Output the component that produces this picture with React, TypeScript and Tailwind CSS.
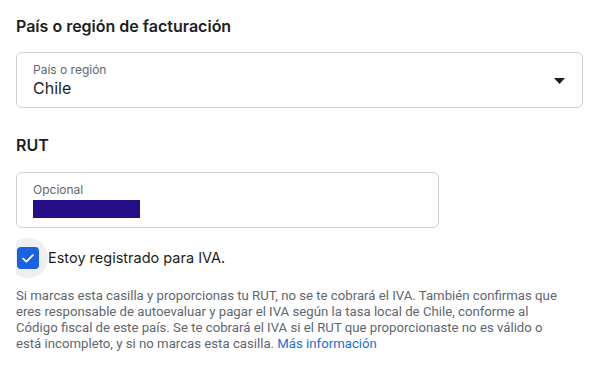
import React from 'react';

function FieldBox({ label, children, className }: { label: string; children: React.ReactNode; className?: string }) {
    return (
        <div className={`border border-[#ccd0d5] rounded-md px-4 pt-[10px] bg-white ${className ?? ''}`}>
            <div className="text-[12px] leading-[14px] text-[#606770]">{label}</div>
            {children}
        </div>
    );
}

export default function App() {
    return (
        <div className="w-[598px] h-[370px] bg-white px-4 pt-[15px] font-['Inter','Liberation_Sans',sans-serif] text-[#1c1e21]">
            <h2 className="text-[16px] leading-[22px] font-semibold">País o región de facturación</h2>

            <FieldBox label="País o región" className="mt-[15px] w-[567px] h-[56px] relative">
                <div className="text-[16px] leading-[20px] mt-[1px]">Chile</div>
                <svg className="absolute right-[17px] top-[25px]" width="11" height="6" viewBox="0 0 11 6">
                    <path d="M0 0 H11 L5.5 6 Z" fill="#1c1e21" />
                </svg>
            </FieldBox>

            <h2 className="mt-[26px] text-[16px] leading-[22px] font-semibold">RUT</h2>

            <FieldBox label="Opcional" className="mt-[16px] w-[423px] h-[56px]">
                <div className="mt-[3px] h-[18px] w-[107px] bg-[#260e89]" />
            </FieldBox>

            <div className="mt-[10px] flex items-center gap-[8px]">
                <div className="relative w-[24px] h-[40px] flex items-center">
                    <div className="absolute left-[-8px] top-0 w-[40px] h-[40px] rounded-full bg-[#eeeff1]" style={{ clipPath: 'inset(0 0 0 8px)' }} />
                    <div className="relative ml-[1px] w-[22px] h-[22px] rounded-[4px] bg-[#1a62e2] flex items-center justify-center">
                        <svg width="12" height="9" viewBox="0 0 12 9">
                            <path d="M1.2 4.6 L4.4 7.6 L10.8 1.2" stroke="white" strokeWidth="1.8" fill="none" strokeLinecap="round" strokeLinejoin="round" />
                        </svg>
                    </div>
                </div>
                <span className="text-[14.5px] leading-[20px]">Estoy registrado para IVA.</span>
            </div>

            <p className="mt-[10px] w-[550px] font-['Roboto','Inter',sans-serif] text-[13.2px] leading-[16px] text-[#606770]">
                Si marcas esta casilla y proporcionas tu RUT, no se te cobrará el IVA. También confirmas que eres responsable de autoevaluar y pagar el IVA según la tasa local de Chile, conforme al Código fiscal de este país. Se te cobrará el IVA si el RUT que proporcionaste no es válido o está incompleto, y si no marcas esta casilla.{' '}
                <a className="text-[#216fdb]" href="#">Más información</a>
            </p>
        </div>
    );
}
